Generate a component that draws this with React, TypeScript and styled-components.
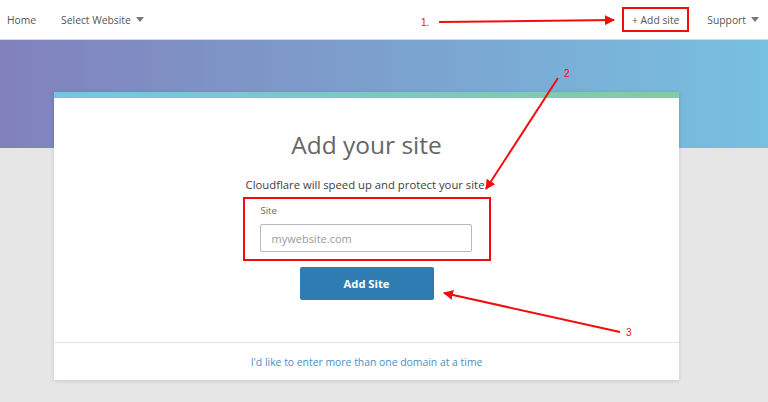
import styled, { createGlobalStyle } from 'styled-components';

const GlobalStyle = createGlobalStyle`
  html, body {
    margin: 0;
    padding: 0;
    background: #e6e6e6;
  }

  body {
    font-family: 'Open Sans', 'Noto Sans', sans-serif;
  }

  * {
    box-sizing: border-box;
  }
`;

const StyledPage = styled.div`
  position: relative;
  width: 768px;
  height: 402px;
  overflow: hidden;
`;

const StyledNav = styled.nav`
  display: flex;
  align-items: center;
  justify-content: space-between;
  height: 40px;
  padding: 0 9px 0 7px;
  background: #fff;
  border-bottom: 1px solid #d9dbe0;
`;

const StyledNavGroup = styled.div<{ $gap: number }>`
  display: flex;
  align-items: center;
  gap: ${({ $gap }) => $gap}px;
`;

type NavItemProps = {
  $boxed?: boolean;
};

const StyledNavItem = styled.span<NavItemProps>`
  display: flex;
  align-items: center;
  gap: 5px;
  height: 25px;
  font-size: 10.3px;
  color: #555;
  white-space: nowrap;
  ${({ $boxed }) => ($boxed ? 'padding: 0 8px; border: 2px solid #f20d0d;' : '')}
`;

const StyledCaret = styled.span`
  width: 0;
  height: 0;
  border-left: 4px solid transparent;
  border-right: 4px solid transparent;
  border-top: 5px solid #777;
`;

const StyledMain = styled.main`
  height: 362px;
  padding: 52px 0 0 54px;
  background: linear-gradient(to right, #8181bc, #77c0e0) top left / 100% 108px no-repeat, #e6e6e6;
`;

const StyledCard = styled.section`
  width: 625px;
  background: #fff;
  box-shadow: 0 1px 4px rgba(0, 0, 0, 0.14);
`;

const StyledAccentBar = styled.div`
  height: 6px;
  background: linear-gradient(to right, #77c6e2, #80cca6);
`;

const StyledCardBody = styled.div`
  display: flex;
  flex-direction: column;
  align-items: center;
  padding: 28px 0 42px;
`;

const StyledTitle = styled.h1`
  margin: 0;
  font-size: 24.5px;
  line-height: 38px;
  font-weight: 400;
  color: #666;
`;

const StyledSubtitle = styled.p`
  margin: 12px 0 0;
  font-size: 11.3px;
  line-height: 18px;
  color: #404040;
`;

const StyledFieldGroup = styled.div`
  display: flex;
  flex-direction: column;
  width: 248px;
  margin-top: 3px;
  padding: 4px 17px 7px 15px;
  border: 2px solid #f20d0d;
`;

const StyledFieldLabel = styled.label`
  padding-left: 1px;
  font-size: 9.5px;
  line-height: 15px;
  color: #666;
`;

const StyledInput = styled.input`
  width: 212px;
  height: 28px;
  margin-top: 6px;
  padding: 0 11px;
  border: 1px solid #b8b8b8;
  border-radius: 2px;
  font-family: inherit;
  font-size: 11px;
  color: #333;

  &::placeholder {
    color: #9a9a9a;
  }
`;

const StyledSubmitButton = styled.button`
  width: 134px;
  height: 33px;
  margin-top: 6px;
  border: none;
  border-radius: 2px;
  background: #2e7cb1;
  color: #fff;
  font-family: inherit;
  font-size: 11.2px;
  font-weight: 700;
`;

const StyledCardFooter = styled.div`
  display: flex;
  align-items: center;
  justify-content: center;
  height: 38px;
  border-top: 1px solid #e3e3e3;
`;

const StyledFooterLink = styled.a`
  font-size: 10.4px;
  color: #4a8fc4;
  text-decoration: none;
`;

const StyledAnnotations = styled.svg`
  position: absolute;
  top: 0;
  left: 0;
  pointer-events: none;
`;

const StyledMarkText = styled.text`
  font-family: 'Liberation Sans', sans-serif;
  font-size: 10px;
  fill: #f20d0d;
`;

function Annotations() {
  return (
    <StyledAnnotations width={768} height={402} viewBox='0 0 768 402'>
      <defs>
        <marker id='head' viewBox='0 0 10 10' refX='9' refY='5' markerWidth='5' markerHeight='5' orient='auto'>
          <path d='M0 0 L10 5 L0 10 Z' fill='#f20d0d' />
        </marker>
      </defs>
      <g stroke='#f20d0d' strokeWidth={2} fill='none' markerEnd='url(#head)'>
        <line x1={439} y1={22} x2={614} y2={20} />
        <line x1={558} y1={78} x2={486} y2={189} />
        <line x1={620} y1={332} x2={444} y2={293} />
      </g>
      <StyledMarkText x={421} y={26}>1.</StyledMarkText>
      <StyledMarkText x={564} y={77}>2</StyledMarkText>
      <StyledMarkText x={626} y={336}>3</StyledMarkText>
    </StyledAnnotations>
  );
}

export default function App() {
  return (
    <StyledPage>
      <GlobalStyle />
      <StyledNav>
        <StyledNavGroup $gap={25}>
          <StyledNavItem>Home</StyledNavItem>
          <StyledNavItem>
            Select Website <StyledCaret />
          </StyledNavItem>
        </StyledNavGroup>
        <StyledNavGroup $gap={18}>
          <StyledNavItem $boxed>+ Add site</StyledNavItem>
          <StyledNavItem>
            Support <StyledCaret />
          </StyledNavItem>
        </StyledNavGroup>
      </StyledNav>
      <StyledMain>
        <StyledCard>
          <StyledAccentBar />
          <StyledCardBody>
            <StyledTitle>Add your site</StyledTitle>
            <StyledSubtitle>Cloudflare will speed up and protect your site.</StyledSubtitle>
            <StyledFieldGroup>
              <StyledFieldLabel htmlFor='site'>Site</StyledFieldLabel>
              <StyledInput id='site' placeholder='mywebsite.com' />
            </StyledFieldGroup>
            <StyledSubmitButton>Add Site</StyledSubmitButton>
          </StyledCardBody>
          <StyledCardFooter>
            <StyledFooterLink href='#'>I'd like to enter more than one domain at a time</StyledFooterLink>
          </StyledCardFooter>
        </StyledCard>
      </StyledMain>
      <Annotations />
    </StyledPage>
  );
}
